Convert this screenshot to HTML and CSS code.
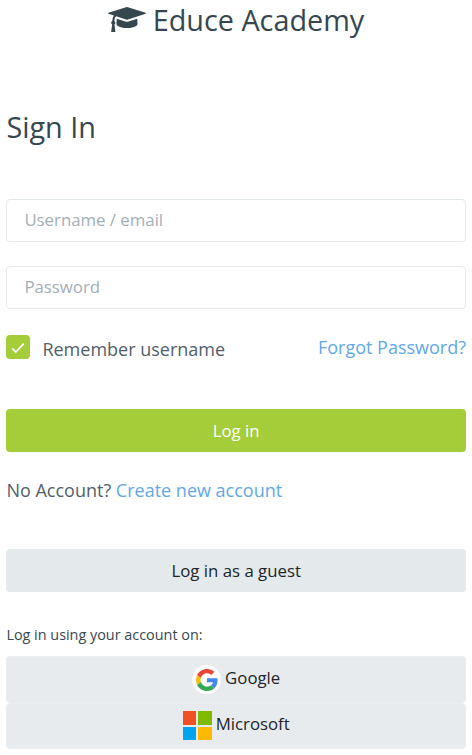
FILE: index.html
```html
<!DOCTYPE html>
<html lang="en">
<head>
<meta charset="utf-8">
<title>Educe Academy</title>
<link rel="stylesheet" href="styles.css">
</head>
<body>
<header class="brand">
<svg class="cap" viewBox="0 128 2304 1536" aria-hidden="true"><path d="M1774 836l18 316q4 69-82 128t-235 93.500-323 34.500-323-34.500-235-93.500-82-128l18-316 574 181q22 7 48 7t48-7zM2304 512q0 23-22 31l-1120 352q-4 1-10 1t-10-1l-652-206q-43 34-71 111.500t-34 178.500q63 36 63 109 0 69-58 107l58 433q2 14-8 25-9 11-24 11h-192q-15 0-24-11-10-11-8-25l58-433q-58-38-58-107 0-73 65-111 11-207 98-330l-333-104q-22-8-22-31t22-31l1120-352q4-1 10-1t10 1l1120 352q22 8 22 31z"/></svg>
<span>Educe Academy</span>
</header>
<main>
<h1>Sign In</h1>
<form>
<input class="field" type="text" placeholder="Username / email">
<input class="field" type="password" placeholder="Password">
<div class="options">
<label class="remember"><span class="box"><svg viewBox="0 0 24 24"><path d="M6.300 13.300l3.500 3.700 8-8.400"/></svg></span><span class="remember-text">Remember username</span></label>
<a href="#">Forgot Password?</a>
</div>
<button class="btn primary" type="button">Log in</button>
</form>
<p class="signup">No Account? <a href="#">Create new account</a></p>
<button class="btn guest" type="button">Log in as a guest</button>
<h2>Log in using your account on:</h2>
<div class="providers">
<button class="provider" type="button"><span class="google"><svg viewBox="0 0 48 48"><path fill="#ea4335" d="M24 9.5c3.54 0 6.71 1.22 9.21 3.6l6.85-6.85C35.9 2.38 30.47 0 24 0 14.62 0 6.51 5.38 2.56 13.22l7.98 6.19C12.43 13.72 17.74 9.5 24 9.5z"/><path fill="#4285f4" d="M46.98 24.55c0-1.57-.15-3.09-.38-4.55H24v9.02h12.94c-.58 2.96-2.26 5.48-4.78 7.18l7.73 6c4.51-4.18 7.09-10.36 7.09-17.65z"/><path fill="#fbbc05" d="M10.53 28.59A14.5 14.5 0 0 1 9.77 24c0-1.6.27-3.14.76-4.59l-7.98-6.19A24 24 0 0 0 0 24c0 3.88.92 7.54 2.56 10.78z"/><path fill="#34a853" d="M24 48c6.48 0 11.93-2.13 15.89-5.81l-7.73-6c-2.15 1.45-4.92 2.3-8.16 2.3-6.26 0-11.57-4.22-13.47-9.91l-7.98 6.19C6.51 42.62 14.62 48 24 48z"/></svg></span><span class="name">Google</span></button>
<button class="provider" type="button"><span class="microsoft"><i></i><i></i><i></i><i></i></span><span class="name">Microsoft</span></button>
</div>
</main>
</body>
</html>
```
FILE: styles.css
```css
* { box-sizing: border-box; }
body { margin: 0; background: #fff; color: #526069; font: 18px/27px "Open Sans", sans-serif; }
a { color: #62a8ea; text-decoration: none; }
.brand { height: 39px; display: flex; align-items: center; justify-content: center; gap: 7px; color: #37474f; font-size: 28.8px; line-height: 39px; }
.cap { width: 38px; height: 25.3px; fill: #37474f; }
main { padding: 0 6px 0 6.4px; }
h1 { margin: 68px 0 53px; color: #37474f; font-size: 28.8px; line-height: 39px; font-weight: 400; }
.field { display: block; width: 100%; height: 43px; margin-bottom: 24px; padding: 0 17px 2px; border: 1px solid #e4eaec; border-radius: 4px; font: 16.8px "Open Sans", sans-serif; color: #37474f; background: #fff; }
.field::placeholder { color: #a3afb7; opacity: 1; }
.options { height: 27px; padding-top: 1px; display: flex; justify-content: space-between; }
.remember { display: flex; gap: 12px; padding-top: 2px; }
.box { width: 24px; height: 24px; margin-top: -1px; border-radius: 4px; background: #a4cd39; }
.box svg { display: block; fill: none; stroke: #fff; stroke-width: 1.7; }
.btn { display: block; width: 100%; height: 43px; padding: 0; border: 0; border-radius: 4px; font: 16.8px "Open Sans", sans-serif; }
.primary { margin-top: 49px; background: #a4cd39; color: #fff; }
.signup { margin: 25px 0 45px; }
.guest { background: #e4eaec; color: #212529; }
h2 { margin: 33px 0 11px; color: #37474f; font-size: 14.4px; line-height: 20px; font-weight: 400; }
.provider { display: flex; justify-content: center; gap: 4px; width: 100%; height: 47px; padding: 8px 0 0; border: 1px solid #ebeef0; border-radius: 4px; background: #e7ebee; color: #212529; font: 16.8px/25px "Open Sans", sans-serif; }
.provider + .provider { height: 46px; padding-top: 7px; }
.google { width: 29px; height: 29px; border-radius: 50%; background: #fff; display: grid; place-items: center; }
.google svg { width: 22px; height: 22px; }
.microsoft { width: 29px; height: 29px; display: grid; grid-template-columns: 1fr 1fr; gap: 2px; }
.microsoft i { background: #f25022; }
.microsoft i:nth-child(2) { background: #7fba00; }
.microsoft i:nth-child(3) { background: #00a4ef; }
.microsoft i:nth-child(4) { background: #ffb900; }
```
